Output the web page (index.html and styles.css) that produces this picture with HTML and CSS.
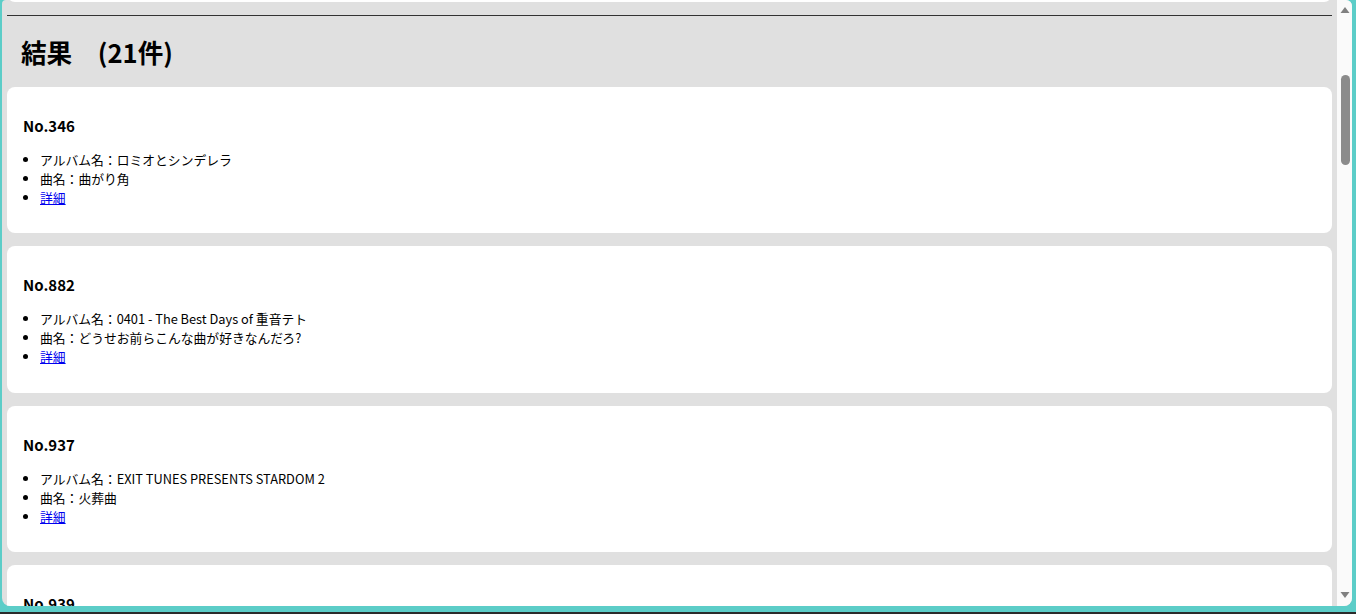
FILE: index.html
```html
<!DOCTYPE html>
<html lang="ja">
<head>
    <meta charset="UTF-8">
    <meta name="viewport" content="width=device-width, initial-scale=1.0">
    <title>検索結果</title>
    <link rel="stylesheet" href="styles.css">
</head>
<body>
    <div class="panel">
        <div class="scroller" id="scroller">
            <div class="content">
                <form class="card search-form" onsubmit="return false">
                    <h2 class="form-title">曲を検索</h2>
                    <label>アルバム名<input type="text" value=""></label>
                    <label>曲名<input type="text" value=""></label>
                    <label>番号<input type="text" value=""></label>
                    <label>キーワード<input type="text" value="テト"></label>
                    <button type="submit">検索</button>
                </form>
                <hr id="divider">
                <h1 class="result-title">結果　(21件)</h1>
                <div id="results"></div>
            </div>
        </div>
        <div class="scrollbar">
            <div class="arrow">
                <svg width="15" height="20" viewBox="0 0 15 20"><path d="M3.5 13 L12.5 13 L8 7 Z" fill="#808080"/></svg>
            </div>
            <div class="track">
                <div class="thumb" id="thumb"></div>
            </div>
            <div class="arrow">
                <svg width="15" height="20" viewBox="0 0 15 20"><path d="M3.5 6 L12.5 6 L8 12 Z" fill="#808080"/></svg>
            </div>
        </div>
    </div>

    <script>
        const results = [
            { no: 346, album: "ロミオとシンデレラ", title: "曲がり角" },
            { no: 882, album: "0401 - The Best Days of 重音テト", title: "どうせお前らこんな曲が好きなんだろ?" },
            { no: 937, album: "EXIT TUNES PRESENTS STARDOM 2", title: "火葬曲" },
            { no: 939, album: "EXIT TUNES PRESENTS STARDOM 2", title: "テトテリトリー" },
            { no: 1012, album: "重音テトベスト", title: "耳のあるロボットの唄" },
            { no: 1045, album: "重音テトベスト", title: "ウソつき" },
            { no: 1101, album: "UTAU MIX", title: "きみとぼくのうた" },
            { no: 1130, album: "UTAU MIX", title: "フランスパン" },
            { no: 1187, album: "テトラポッド", title: "夜明けの歌" },
            { no: 1203, album: "テトラポッド", title: "花火" },
            { no: 1256, album: "0401 - The Best Days of 重音テト", title: "エイプリルフール" },
            { no: 1290, album: "0401 - The Best Days of 重音テト", title: "テトのうた" },
            { no: 1334, album: "EXIT TUNES PRESENTS STARDOM 3", title: "リンネ" },
            { no: 1378, album: "EXIT TUNES PRESENTS STARDOM 3", title: "ハロー" },
            { no: 1402, album: "重音テト Collection", title: "ツインドリル" },
            { no: 1455, album: "重音テト Collection", title: "さよならの代わりに" },
            { no: 1499, album: "UTAU BEST", title: "星の降る夜" },
            { no: 1523, album: "UTAU BEST", title: "ねこの日" },
            { no: 1560, album: "テトの日", title: "約束" },
            { no: 1602, album: "テトの日", title: "またね" },
            { no: 1648, album: "重音テト 10th", title: "ありがとう" }
        ];
        const list = document.getElementById("results");
        const scroller = document.getElementById("scroller");
        const thumb = document.getElementById("thumb");

        results.forEach(item => {
            const card = document.createElement("div");
            card.className = "card result";
            card.innerHTML =
                "<h3>No." + item.no + "</h3>" +
                "<ul>" +
                "<li>アルバム名：" + item.album + "</li>" +
                "<li>曲名：" + item.title + "</li>" +
                "<li><a href=\"#" + item.no + "\">詳細</a></li>" +
                "</ul>";
            list.appendChild(card);
        });

        function updateThumb() {
            const track = thumb.parentElement.clientHeight;
            const ratio = scroller.clientHeight / scroller.scrollHeight;
            thumb.style.height = Math.round(track * ratio) + "px";
            thumb.style.marginTop = Math.round(track * scroller.scrollTop / scroller.scrollHeight) + "px";
        }

        // jump to the results like after submitting the form
        scroller.scrollTop = document.getElementById("divider").offsetTop - 15;
        scroller.addEventListener("scroll", updateThumb);
        updateThumb();
    </script>
</body>
</html>
```

FILE: styles.css
```css
html, body {
    margin: 0;
    height: 614px;
    overflow: hidden;
}
body {
    box-sizing: border-box;
    padding: 0 4px 6px 2px;
    background: #5ccdc8;
    border-bottom: 2px solid #2b2b2b;
    font-family: "Noto Sans CJK JP", "Noto Sans", sans-serif;
    font-size: 12.8px;
    color: #000;
}
.panel {
    display: flex;
    height: 606px;
    overflow: hidden;
    background: #e0e0e0;
    border-radius: 4px 6px 8px 8px;
}
.scroller {
    position: relative;
    flex: 1;
    overflow: hidden;
}
.scrollbar {
    display: flex;
    flex-direction: column;
    width: 15px;
    background: #fafafa;
}
.arrow {
    height: 20px;
}
.arrow svg {
    display: block;
}
.track {
    flex: 1;
}
.thumb {
    width: 9px;
    margin-left: 4px;
    background: #8b8b8b;
    border-radius: 5px;
}
.content {
    padding: 5px 5px 13px;
}
.card {
    background: #fff;
    border-radius: 8px;
}
.search-form {
    box-sizing: border-box;
    display: flex;
    flex-direction: column;
    gap: 10px;
    height: 367px;
    padding: 24px 16px;
}
.form-title {
    margin: 0 0 4px;
    font-size: 20px;
}
.search-form label {
    display: flex;
    flex-direction: column;
    gap: 4px;
}
.search-form input {
    width: 320px;
    padding: 4px 6px;
    font: inherit;
}
.search-form button {
    width: 80px;
    padding: 4px;
    font: inherit;
}
hr {
    margin: 13px 0 0;
    height: 0;
    border: none;
    border-top: 1px solid #333;
}
.result-title {
    margin: 17px 0;
    padding-left: 14px;
    font-size: 25.6px;
}
.result {
    margin-bottom: 13px;
    padding: 28px 16px 26.3px;
}
.result h3 {
    margin: 0;
    font-size: 15px;
}
.result ul {
    margin: 14px 0 0;
    padding-left: 17px;
}
.result a {
    color: #0000ee;
}
```
